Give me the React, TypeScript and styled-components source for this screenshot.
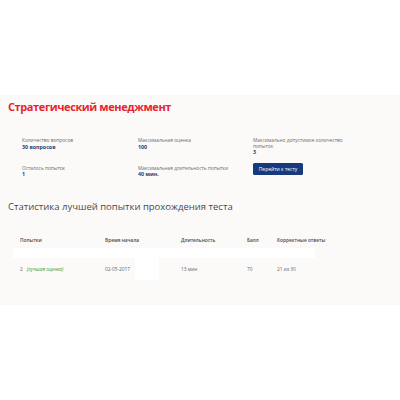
import React from "react";
import styled, { createGlobalStyle } from "styled-components";

const Global = createGlobalStyle`
  html, body { margin: 0; padding: 0; background: #ffffff; }
  body { font-family: "Open Sans", "Liberation Sans", sans-serif; }
`;

const Page = styled.div`
  width: 400px;
  height: 400px;
  background: #ffffff;
  padding-top: 95px;
  box-sizing: border-box;
`;

const Panel = styled.section`
  background: #fbfaf8;
  height: 210px;
  padding: 4px 8px 0 8px;
  box-sizing: border-box;
`;

const Title = styled.h1`
  margin: 0;
  font-family: "Open Sans", sans-serif;
  font-weight: 700;
  font-size: 11px;
  line-height: 16px;
  color: #e8232e;
  letter-spacing: -0.4px;
`;

const InfoGrid = styled.div`
  display: grid;
  grid-template-columns: 116px 115px 90px;
  row-gap: 10px;
  margin: 23px 0 0 14px;
`;

const InfoCell = styled.div`
  display: flex;
  flex-direction: column;
`;

const Label = styled.span`
  font-size: 4.8px;
  line-height: 5.6px;
  color: #6a6a6a;
`;

const Value = styled.span`
  font-size: 5.3px;
  line-height: 6.4px;
  font-weight: 700;
  color: #2d4170;
`;

const Button = styled.button`
  width: 50px;
  height: 12px;
  margin-top: -3px;
  border: none;
  border-radius: 1.5px;
  background: #173a7d;
  color: #ffffff;
  font-family: "Open Sans", sans-serif;
  font-size: 5px;
  padding: 0;
`;

const Subtitle = styled.h2`
  margin: 22px 0 0 0;
  font-weight: 400;
  font-size: 9.5px;
  line-height: 14px;
  color: #4a4a4a;
`;

const Table = styled.div`
  margin: 18px 0 0 5px;
  width: 302px;
`;

const Row = styled.div<{ $white?: boolean; $h: number }>`
  display: grid;
  grid-template-columns: 85px 76px 66px 30px 1fr;
  align-items: center;
  height: ${(p) => p.$h}px;
  padding-left: 7px;
  white-space: nowrap;
  background: ${(p) => (p.$white ? "#ffffff" : "transparent")};
`;

const Head = styled.span`
  font-size: 4.8px;
  font-weight: 600;
  color: #4a4a4a;
`;

const Cell = styled.span`
  font-size: 4.8px;
  color: #666666;
  display: flex;
  align-items: center;
  gap: 4px;
`;

const Best = styled.em`
  color: #3a9a3a;
  font-style: italic;
`;

const Patch = styled.span`
  display: inline-block;
  width: 24px;
  height: 22px;
  background: #ffffff;
  margin-left: 1px;
`;

export default function App() {
  return (
    <>
      <Global />
      <Page>
        <Panel>
          <Title>Стратегический менеджмент</Title>
          <InfoGrid>
            <InfoCell>
              <Label>Количество вопросов</Label>
              <Value>30 вопросов</Value>
            </InfoCell>
            <InfoCell>
              <Label>Максимальная оценка</Label>
              <Value>100</Value>
            </InfoCell>
            <InfoCell>
              <Label>Максимально допустимое количество</Label>
              <Label>попыток</Label>
              <Value>3</Value>
            </InfoCell>
            <InfoCell>
              <Label>Осталось попыток</Label>
              <Value>1</Value>
            </InfoCell>
            <InfoCell>
              <Label>Максимальная длительность попытки</Label>
              <Value>40 мин.</Value>
            </InfoCell>
            <InfoCell>
              <Button>Перейти к тесту</Button>
            </InfoCell>
          </InfoGrid>
          <Subtitle>Статистика лучшей попытки прохождения теста</Subtitle>
          <Table>
            <Row $h={16}>
              <Head>Попытки</Head>
              <Head>Время начала</Head>
              <Head>Длительность</Head>
              <Head>Балл</Head>
              <Head>Корректные ответы</Head>
            </Row>
            <Row $h={10} $white />
            <Row $h={22}>
              <Cell>
                2 <Best>(лучшая оценка)</Best>
              </Cell>
              <Cell>
                02-05-2017
                <Patch />
              </Cell>
              <Cell>13 мин</Cell>
              <Cell>70</Cell>
              <Cell>21 из 30</Cell>
            </Row>
          </Table>
        </Panel>
      </Page>
    </>
  );
}
